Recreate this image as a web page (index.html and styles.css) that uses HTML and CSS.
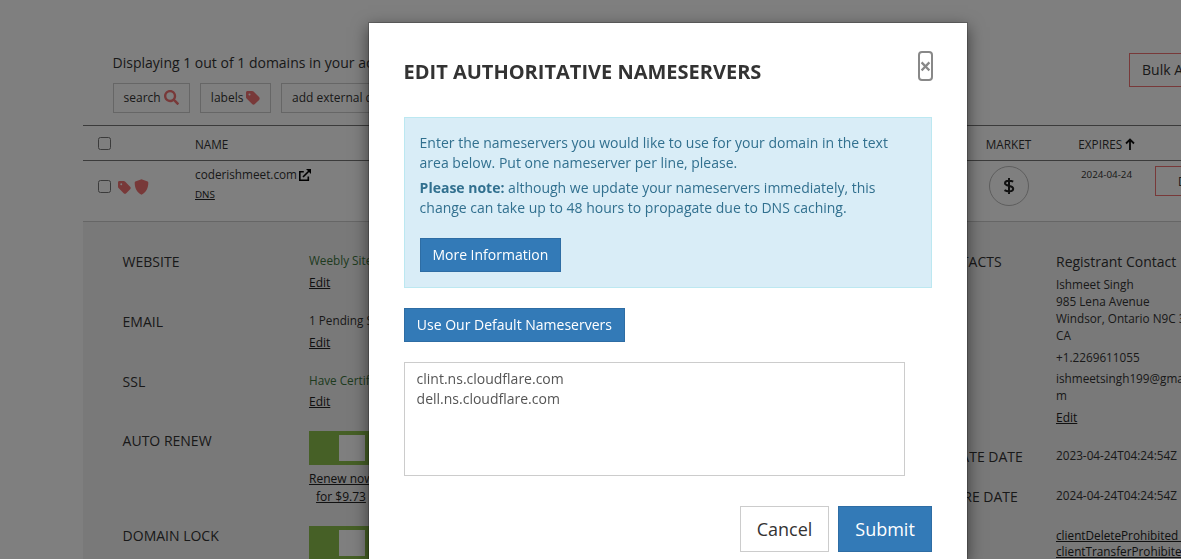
FILE: index.html
```html
<!DOCTYPE html>
<html lang="en">
<head>
  <meta charset="UTF-8">
  <meta name="viewport" content="width=device-width, initial-scale=1.0">
  <title>Domains</title>
  <link rel="stylesheet" href="styles.css">
</head>

<body>
  <div class="page">
    <div class="toolbar">
      <div class="toolbar-left">
        <p class="count">Displaying 1 out of 1 domains in your account</p>
        <div class="filters">
          <button class="btn-small">search <svg class="icon-search" viewBox="0 0 512 512"><path d="M505 442.700L405.300 343c-4.500-4.500-10.600-7-17-7H372c27.600-35.300 44-79.700 44-128C416 93.100 322.900 0 208 0S0 93.100 0 208s93.100 208 208 208c48.300 0 92.700-16.400 128-44v16.300c0 6.400 2.500 12.500 7 17l99.700 99.700c9.400 9.400 24.600 9.400 33.900 0l28.300-28.300c9.400-9.400 9.400-24.600.1-34zM208 336c-70.700 0-128-57.200-128-128 0-70.700 57.200-128 128-128 70.700 0 128 57.200 128 128 0 70.700-57.200 128-128 128z"/></svg></button>
          <button class="btn-small">labels <svg class="icon-tag" viewBox="0 0 448 512"><path d="M0 80V229.500c0 17 6.700 33.300 18.700 45.300l176 176c25 25 65.500 25 90.500 0L418.700 317.300c25-25 25-65.500 0-90.500l-176-176c-12-12-28.300-18.700-45.300-18.700H48C21.500 32 0 53.500 0 80zm112 32a32 32 0 1 1 0 64 32 32 0 1 1 0-64z"/></svg></button>
          <button class="btn-small">add external domain</button>
        </div>
      </div>
      <button class="bulk">Bulk Actions</button>
    </div>

    <div class="row row-head">
      <div class="col-check"><input type="checkbox"></div>
      <div class="col-name">NAME</div>
      <div class="col-market">MARKET</div>
      <div class="col-expires">EXPIRES <svg class="icon-up" viewBox="0 0 10 12"><path d="M5 12V1.500M1 5.500L5 1.500l4 4"/></svg></div>
    </div>

    <div class="row row-domain">
      <div class="col-check">
        <input type="checkbox">
        <svg class="icon-tag" viewBox="0 0 448 512"><path d="M0 80V229.500c0 17 6.700 33.300 18.700 45.300l176 176c25 25 65.500 25 90.500 0L418.700 317.300c25-25 25-65.500 0-90.500l-176-176c-12-12-28.300-18.700-45.300-18.700H48C21.500 32 0 53.500 0 80zm112 32a32 32 0 1 1 0 64 32 32 0 1 1 0-64z"/></svg>
        <svg class="icon-shield" viewBox="0 0 14 16"><path d="M7 .3 13.200 2.600Q13.800 2.900 13.800 3.600C13.900 9 11.800 13.400 7 15.700 2.200 13.400.1 9 .2 3.600Q.2 2.900.8 2.600Z"/></svg>
      </div>
      <div class="col-name">
        <div>coderishmeet.com <svg class="icon-external" viewBox="0 0 12 12"><path class="line" d="M4.800 2.700H.8v8.500h8.500V7.400M4 8l6-6"/><path d="M7 0H12v5z"/></svg></div>
        <a class="dns" href="#">DNS</a>
      </div>
      <div class="col-market"><span class="coin"><svg viewBox="0 0 12 18"><path d="M6 1v16M10.200 4.700C8.500 3.700 2 2.700 2 6.200 2 9.600 10.200 8 10.200 11.800 10.200 15.500 3.500 14.500 1.500 13.200"/></svg></span></div>
      <div class="col-expires date">2024-04-24</div>
      <button class="details-btn">Details</button>
    </div>

    <div class="details">
      <div class="details-left">
        <div class="item">
          <div class="label">WEBSITE</div>
          <div class="value"><p class="green">Weebly Site</p><a class="edit" href="#">Edit</a></div>
        </div>
        <div class="item">
          <div class="label">EMAIL</div>
          <div class="value"><p>1 Pending Setup</p><a class="edit" href="#">Edit</a></div>
        </div>
        <div class="item">
          <div class="label">SSL</div>
          <div class="value"><p class="green">Have Certificate</p><a class="edit" href="#">Edit</a></div>
        </div>
        <div class="item item-toggle">
          <div class="label">AUTO RENEW</div>
          <div class="value"><div class="toggle"><span></span></div><a class="renew" href="#">Renew now<br>for $9.73</a></div>
        </div>
        <div class="item item-toggle">
          <div class="label">DOMAIN LOCK</div>
          <div class="value"><div class="toggle"><span></span></div></div>
        </div>
      </div>

      <div class="details-right">
        <div class="item item-contact">
          <div class="label">CONTACTS</div>
          <div class="value">
            <h4>Registrant Contact</h4>
            <p>Ishmeet Singh<br>985 Lena Avenue<br>Windsor, Ontario N9C 3G2<br>CA</p>
            <p>+1.2269611055</p>
            <p>ishmeetsingh199@gmail.co<br>m</p>
            <a class="edit" href="#">Edit</a>
          </div>
        </div>
        <div class="item item-date">
          <div class="label">CREATE DATE</div>
          <div class="value">2023-04-24T04:24:54Z</div>
        </div>
        <div class="item item-date">
          <div class="label">EXPIRE DATE</div>
          <div class="value">2024-04-24T04:24:54Z</div>
        </div>
        <div class="item item-date">
          <div class="label"></div>
          <div class="value"><a href="#">clientDeleteProhibited <b>|</b></a><br><a href="#">clientTransferProhibited</a></div>
        </div>
      </div>
    </div>
  </div>

  <div class="backdrop"></div>

  <div class="modal">
    <div class="modal-header">
      <h2>EDIT AUTHORITATIVE NAMESERVERS</h2>
      <button class="close">×</button>
    </div>
    <div class="alert">
      <p>Enter the nameservers you would like to use for your domain in the text area below. Put one nameserver per line, please.</p>
      <p><strong>Please note:</strong> although we update your nameservers immediately, this change can take up to 48 hours to propagate due to DNS caching.</p>
      <button class="btn btn-primary">More Information</button>
    </div>
    <button class="btn btn-primary">Use Our Default Nameservers</button>
    <textarea class="nameservers" spellcheck="false">clint.ns.cloudflare.com
dell.ns.cloudflare.com</textarea>
    <div class="modal-footer">
      <button class="btn btn-lg">Cancel</button>
      <button class="btn btn-lg btn-primary">Submit</button>
    </div>
  </div>
</body>
</html>
```
FILE: styles.css
```css
* {
  box-sizing: border-box;
}

body {
  margin: 0;
  height: 559px;
  overflow: hidden;
  font-family: "Open Sans", sans-serif;
  font-size: 14px;
  line-height: 20px;
  color: #333;
  background: #fff;
}

p, h2, h4 {
  margin: 0;
}

a {
  color: #222;
  text-decoration: underline;
}

button, textarea {
  font-family: inherit;
  color: #333;
  background: #fff;
}

.page {
  width: 1240px;
  height: 559px;
  padding: 53px 0 0 83px;
  overflow: hidden;
}

.toolbar {
  display: flex;
  justify-content: space-between;
  height: 72px;
  padding-left: 29.6px;
}

.filters {
  display: flex;
  gap: 10px;
  margin-top: 10px;
}

.btn-small {
  height: 30px;
  padding: 5px 10px;
  border: 1px solid #ccc;
  font-size: 12px;
  line-height: 18px;
}

.icon-search, .icon-tag, .icon-shield {
  fill: #f17373;
}

.icon-search {
  width: 15px;
  height: 15px;
  vertical-align: -3px;
}

.icon-tag {
  width: 14px;
  height: 16px;
  margin-left: -0.5px;
  vertical-align: -4px;
}

.bulk {
  width: 111px;
  height: 34px;
  padding: 6px 12px;
  border: 1px solid #f17373;
  font-size: 14px;
  line-height: 20px;
  text-align: left;
}

.row {
  display: flex;
  border-top: 1px solid #777;
  font-size: 11.76px;
  line-height: 17px;
}

.row-head {
  height: 35px;
  padding-top: 2px;
  align-items: center;
}

.row-domain {
  height: 61px;
  padding-top: 5px;
}

.col-check {
  display: flex;
  align-items: center;
  width: 112px;
  padding-left: 15px;
}

.col-check input {
  width: 13px;
  height: 13px;
  margin: 0 0 2px;
}

.row-domain .col-check {
  height: 42px;
}

.row-domain .icon-tag {
  width: 13px;
  height: 15px;
  margin: 1px 3px 0 7px;
}

.icon-shield {
  width: 15px;
  height: 16px;
}

.col-name {
  width: 766px;
}

.icon-external {
  width: 12px;
  height: 12px;
  margin-left: -1px;
  vertical-align: -2px;
}

.icon-external .line {
  fill: none;
  stroke: #000;
  stroke-width: 1.6;
}

.dns {
  display: inline-block;
  margin-top: 3px;
  font-size: 9.8px;
}

.col-market {
  display: flex;
  justify-content: center;
  width: 95px;
}

.coin {
  display: flex;
  align-items: center;
  justify-content: center;
  width: 40px;
  height: 40px;
  border: 1px solid #bbb;
  border-radius: 50%;
}

.coin svg {
  width: 12px;
  height: 18px;
  fill: none;
  stroke: #222;
  stroke-width: 2;
}

.col-expires {
  width: 101px;
  text-align: center;
}

.icon-up {
  width: 10px;
  height: 12px;
  margin-left: -0.5px;
  vertical-align: -1px;
  fill: none;
  stroke: #111;
  stroke-width: 1.8;
}

.date {
  font-size: 9.8px;
}

.details-btn {
  width: 84px;
  height: 30px;
  margin-left: -2px;
  padding: 0 21px;
  border: 1px solid #f17373;
  font-size: 12px;
}

.details {
  display: flex;
  height: 340px;
  padding: 30px 0 0 39.6px;
  border-top: 1px solid #ccc;
  background: #f2f2f2;
}

.details-left {
  width: 808px;
}

.item {
  display: flex;
  height: 59.8px;
  font-size: 11.76px;
  line-height: 16.8px;
}

.label {
  width: 186.4px;
  font-size: 14px;
  line-height: 20px;
}

.green {
  color: #3c763d;
}

.edit {
  display: inline-block;
  margin-top: 5px;
  font-size: 12px;
  line-height: 18px;
}

.item-toggle {
  height: 95px;
}

.toggle {
  width: 64px;
  height: 34px;
  padding: 4px 0 0 30px;
  background: #8cc14c;
}

.toggle span {
  display: block;
  width: 26px;
  height: 26px;
  background: #fff;
}

.renew {
  display: block;
  width: 64px;
  margin-top: 5px;
  font-size: 12px;
  line-height: 18px;
  text-align: center;
  white-space: nowrap;
}

.details-right .label {
  width: 125.4px;
}

.item-contact {
  height: 195px;
}

.item-contact h4 {
  margin-bottom: 4.4px;
  font-size: 14px;
  font-weight: normal;
  line-height: 20px;
}

.item-contact p {
  margin-bottom: 5px;
}

.item-contact .edit {
  margin-top: 0;
}

.item-date {
  height: 40px;
}

.item-date .label {
  padding-left: 4.5px;
}

.item-date .value {
  margin-top: -0.5px;
  white-space: nowrap;
}

/* modal */
.backdrop {
  position: fixed;
  inset: 0;
  background: rgba(0, 0, 0, 0.5);
}

.modal {
  position: absolute;
  top: 22px;
  left: 368px;
  width: 600px;
  height: 537px;
  padding: 28px 35px 0;
  border: 1px solid rgba(0, 0, 0, 0.2);
  border-bottom: 0;
  background: #fff;
  background-clip: padding-box;
  box-shadow: 0 5px 15px rgba(0, 0, 0, 0.5);
}

.modal-header {
  display: flex;
  justify-content: space-between;
  height: 66px;
}

.modal-header h2 {
  margin-top: 10px;
  margin-left: -0.5px;
  font-size: 20px;
  line-height: 22px;
}

.close {
  display: flex;
  justify-content: center;
  width: 15px;
  height: 30px;
  margin-right: -1px;
  padding: 0;
  border: 2px solid #888;
  border-radius: 4px;
  font-size: 21px;
  font-weight: bold;
  line-height: 26px;
  color: #888;
}

.alert {
  height: 171px;
  margin-bottom: 20px;
  padding: 15px 15px 15px 14.6px;
  border: 1px solid #bce8f1;
  background: #d9edf7;
  color: #31708f;
}

.alert p + p {
  margin: 5px 0 20px;
}

.btn {
  height: 34px;
  padding: 6px 12px 6px 11.8px;
  border: 1px solid #ccc;
  font-size: 14px;
  line-height: 20px;
}

.btn-primary {
  border-color: #2e6da4;
  background: #337ab7;
  color: #fff;
}

.nameservers {
  display: block;
  width: 501px;
  height: 114px;
  margin: 20px 0 30px;
  padding: 6px 11.6px;
  border: 1px solid #ccc;
  border-radius: 0;
  resize: none;
  font-size: 14px;
  line-height: 20px;
  color: #555;
}

.modal-footer {
  display: flex;
  justify-content: flex-end;
  gap: 9px;
}

.btn-lg {
  height: 46px;
  padding: 10px 16.2px 10px 15.8px;
  font-size: 18px;
  line-height: 24px;
}
```
